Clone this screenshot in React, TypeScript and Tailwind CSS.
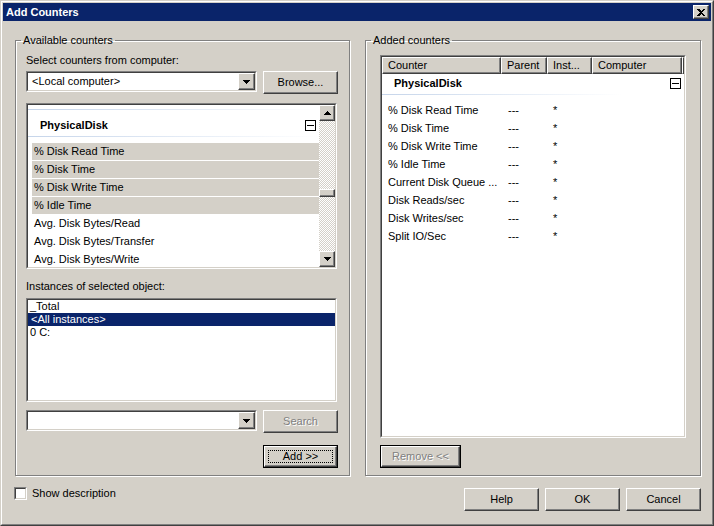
import React from 'react';

const raised =
  'bg-[#d4d0c8] border border-white border-r-[#404040] border-b-[#404040] shadow-[inset_-1px_-1px_0_#808080]';

const disabledText = 'text-[#808080] [text-shadow:1px_1px_0_#ffffff]';

const DownArrow = () => (
  <svg width="7" height="4" viewBox="0 0 7 4" shapeRendering="crispEdges">
    <rect x="0" y="0" width="7" height="1" fill="#000" />
    <rect x="1" y="1" width="5" height="1" fill="#000" />
    <rect x="2" y="2" width="3" height="1" fill="#000" />
    <rect x="3" y="3" width="1" height="1" fill="#000" />
  </svg>
);

const UpArrow = () => (
  <svg width="7" height="4" viewBox="0 0 7 4" shapeRendering="crispEdges">
    <rect x="3" y="0" width="1" height="1" fill="#000" />
    <rect x="2" y="1" width="3" height="1" fill="#000" />
    <rect x="1" y="2" width="5" height="1" fill="#000" />
    <rect x="0" y="3" width="7" height="1" fill="#000" />
  </svg>
);

const MinusBox = () => (
  <svg width="11" height="11" viewBox="0 0 11 11" shapeRendering="crispEdges">
    <rect x="0.5" y="0.5" width="10" height="10" fill="#fff" stroke="#000" />
    <rect x="2" y="5" width="7" height="1" fill="#000" />
  </svg>
);

// two-pixel sunken well, white inside
const Sunken: React.FC<{ className?: string; children?: React.ReactNode }> = ({ className = '', children }) => (
  <div className={`border border-[#808080] border-r-white border-b-white ${className}`}>
    <div className="h-full border border-[#404040] border-r-[#d4d0c8] border-b-[#d4d0c8] bg-white">{children}</div>
  </div>
);

const Combo: React.FC<{ text?: string }> = ({ text }) => (
  <Sunken className="w-[231px] h-[21px] shrink-0">
    <div className="flex h-full items-center">
      <span className="flex-1 pl-[4px]">{text}</span>
      <div className={`${raised} w-[17px] h-[17px] flex items-center justify-center`}>
        <DownArrow />
      </div>
    </div>
  </Sunken>
);

interface BtnProps {
  label: string;
  width: string;
  disabled?: boolean;
  isDefault?: boolean;
  focused?: boolean;
}

const Btn: React.FC<BtnProps> = ({ label, width, disabled, isDefault, focused }) => {
  const inner = (
    <div className={`${raised} h-full flex items-center justify-center ${focused ? 'p-[3px]' : ''}`}>
      {focused ? (
        <span className="flex-1 h-full flex items-center justify-center border border-dotted border-black">{label}</span>
      ) : (
        <span className={disabled ? disabledText : ''}>{label}</span>
      )}
    </div>
  );
  return <div className={`${width} h-[23px] shrink-0 ${isDefault ? 'border border-black' : ''}`}>{inner}</div>;
};

const fieldset = 'border border-[#808080] shadow-[inset_1px_1px_0_#ffffff,1px_1px_0_#ffffff] h-[442px] min-w-0 shrink-0';

const leftCounters = [
  { name: '% Disk Read Time', sel: true },
  { name: '% Disk Time', sel: true },
  { name: '% Disk Write Time', sel: true },
  { name: '% Idle Time', sel: true },
  { name: 'Avg. Disk Bytes/Read', sel: false },
  { name: 'Avg. Disk Bytes/Transfer', sel: false },
  { name: 'Avg. Disk Bytes/Write', sel: false },
];

const addedCounters = [
  '% Disk Read Time',
  '% Disk Time',
  '% Disk Write Time',
  '% Idle Time',
  'Current Disk Queue ...',
  'Disk Reads/sec',
  'Disk Writes/sec',
  'Split IO/Sec',
];

const App: React.FC = () => {
  return (
    <div className="w-[714px] h-[526px] bg-[#d4d0c8] border border-[#d4d0c8] border-r-[#404040] border-b-[#404040] font-['Liberation_Sans',Arial,sans-serif] text-[11px] leading-[13px] text-black select-none">
      <div className="h-full border border-white border-r-[#808080] border-b-[#808080] p-px flex flex-col">
        {/* title bar */}
        <div className="h-[18px] bg-[#0a246a] flex items-center justify-between pl-[3px] pr-[2px]">
          <span className="text-white font-bold text-[11px]">Add Counters</span>
          <div className={`${raised} w-[16px] h-[14px] flex items-center justify-center`}>
            <svg width="8" height="7" viewBox="0 0 8 7" shapeRendering="crispEdges">
              <path d="M0 0h2l2 2 2-2h2L5 3.5 8 7H6L4 5 2 7H0l3-3.5z" fill="#000" />
            </svg>
          </div>
        </div>

        <div className="flex-1 flex flex-col pl-[12px] pr-[10px]">
          <div className="mt-[13px] flex gap-[15px]">
            {/* Available counters */}
            <fieldset className={`${fieldset} w-[335px] pl-[10px] pr-[11px] flex flex-col`}>
              <legend className="-ml-[5px] px-[2px] leading-[13px]">Available counters</legend>
              <div className="mt-[7px]">Select counters from computer:</div>
              <div className="mt-[4px] h-[23px] flex items-start gap-[6px]">
                <Combo text="<Local computer>" />
                <Btn label="Browse..." width="w-[75px]" />
              </div>

              <Sunken className="mt-[9px] w-[311px] h-[166px]">
                <div className="flex h-full">
                  <div className="flex-1 overflow-hidden">
                    <div className="mt-[4px] h-px bg-gradient-to-r from-[#c6d5ea] via-[#e2eaf5] to-white" />
                    <div className="h-[26px] pt-[4px] flex items-center justify-between pl-[12px] pr-[3px]">
                      <span className="font-bold">PhysicalDisk</span>
                      <MinusBox />
                    </div>
                    <div className="h-px bg-gradient-to-r from-[#c6d5ea] via-[#e2eaf5] to-white" />
                    <div className="mt-[6px]">
                      {leftCounters.map((c) => (
                        <div key={c.name} className="h-[18px]">
                          <div className={`h-[17px] ml-[4px] pl-[2px] flex items-center ${c.sel ? 'bg-[#d4d0c8]' : ''}`}>
                            {c.name}
                          </div>
                        </div>
                      ))}
                    </div>
                  </div>
                  <div className="w-[16px] flex flex-col">
                    <div className={`${raised} h-[16px] flex items-center justify-center`}>
                      <UpArrow />
                    </div>
                    <div className="flex-1 bg-[repeating-conic-gradient(#d4d0c8_0%_25%,#ffffff_0%_50%)] bg-[length:2px_2px]">
                      <div className={`${raised} mt-[68px] h-[8px]`} />
                    </div>
                    <div className={`${raised} h-[16px] flex items-center justify-center`}>
                      <DownArrow />
                    </div>
                  </div>
                </div>
              </Sunken>

              <div className="mt-[11px]">Instances of selected object:</div>
              <Sunken className="mt-[5px] w-[311px] h-[104px]">
                <div className="h-[13px] pl-[2px] flex items-center">_Total</div>
                <div className="h-[13px] pl-[3px] flex items-center bg-[#0a246a] text-white">&lt;All instances&gt;</div>
                <div className="h-[13px] pl-[2px] flex items-center">0 C:</div>
              </Sunken>

              <div className="mt-[8px] h-[23px] flex items-start gap-[6px]">
                <Combo />
                <Btn label="Search" width="w-[75px]" disabled />
              </div>
              <div className="mt-[12px] self-end">
                <Btn label="Add >>" width="w-[75px]" isDefault focused />
              </div>
            </fieldset>

            {/* Added counters */}
            <fieldset className={`${fieldset} w-[336px] pl-[14px] flex flex-col`}>
              <legend className="-ml-[9px] px-[2px] leading-[13px]">Added counters</legend>
              <Sunken className="mt-[8px] w-[306px] h-[383px]">
                <div className="flex h-[17px]">
                  {[
                    { t: 'Counter', w: 'w-[119px]' },
                    { t: 'Parent', w: 'w-[46px]' },
                    { t: 'Inst...', w: 'w-[45px]' },
                    { t: 'Computer', w: 'w-[90px]' },
                  ].map((h) => (
                    <div key={h.t} className={`${raised} ${h.w} pl-[5px] flex items-center`}>
                      {h.t}
                    </div>
                  ))}
                  <div className={`${raised} flex-1`} />
                </div>
                <div className="h-[20px] pb-[2px] flex items-center justify-between pl-[12px] pr-[3px]">
                  <span className="font-bold">PhysicalDisk</span>
                  <MinusBox />
                </div>
                <div className="h-px w-[240px] bg-gradient-to-r from-[#c6d5ea] via-[#e2eaf5] to-white" />
                <div className="mt-[6px]">
                  {addedCounters.map((c) => (
                    <div key={c} className="h-[18px] flex items-center">
                      <span className="w-[119px] pl-[6px] whitespace-nowrap">{c}</span>
                      <span className="w-[46px] pl-[7px]">---</span>
                      <span className="w-[45px] pl-[6px]">*</span>
                    </div>
                  ))}
                </div>
              </Sunken>
              <div className="mt-[7px]">
                <Btn label="Remove <<" width="w-[81px]" isDefault disabled />
              </div>
            </fieldset>
          </div>

          {/* bottom row */}
          <div className="mt-[11px] flex items-start">
            <div className="-ml-px flex items-center gap-[5px]">
              <Sunken className="w-[13px] h-[13px]" />
              <span>Show description</span>
            </div>
            <div className="ml-auto mt-px flex gap-[6px]">
              <Btn label="Help" width="w-[75px]" />
              <Btn label="OK" width="w-[75px]" />
              <Btn label="Cancel" width="w-[75px]" />
            </div>
          </div>
        </div>
      </div>
    </div>
  );
};

export default App;
